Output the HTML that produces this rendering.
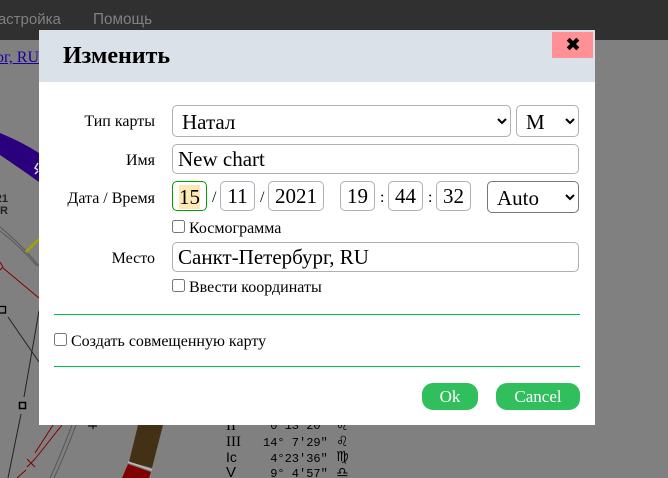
<!DOCTYPE html>
<html><head><meta charset="utf-8">
<style>
html,body{margin:0;padding:0;width:668px;height:478px;overflow:hidden;background:#808080}
body{position:relative;font-family:"Liberation Serif","Noto Serif CJK SC",serif;color:#000}
.a{position:absolute;white-space:nowrap}
.box{position:absolute;box-sizing:border-box;border:1px solid #a9b2bb;border-radius:5px;background:#fff;font-size:21px;line-height:29px;white-space:nowrap}
.c{text-align:center}
.l{position:absolute;right:513px;font-size:16px;line-height:18px;white-space:nowrap}
.cb{position:absolute;box-sizing:border-box;width:13px;height:13px;border:1px solid #767676;border-radius:2.5px;background:#fff}
.t{position:absolute;font-size:16px;line-height:18px;white-space:nowrap}
.hr{position:absolute;left:54px;width:526px;height:1px;background:#00c04b}
.btn{position:absolute;top:383px;height:27px;background:#30bf5c;border-radius:11px;color:#fff;font-size:17px;line-height:28px;text-align:center}
.mono{position:absolute;font-family:"Liberation Mono",monospace;font-size:12px;line-height:16px;color:#000;white-space:pre}
.z{position:absolute;font-family:"DejaVu Sans",sans-serif;font-size:14px;line-height:16px;color:#000;white-space:pre}
.h{position:absolute;left:226px;font-family:"Liberation Sans",sans-serif;line-height:16px;color:#000;white-space:pre}
</style></head>
<body>
<svg class="a" style="left:0;top:0" width="668" height="478" viewBox="0 0 668 478">
<rect x="0" y="40" width="668" height="438" fill="#808080"/>
<path d="M0 133 Q22 142 39 153 L39 182 Q18 167 0 155Z" fill="#2a007d"/>
<path d="M38 163l-3 5 3 2M38 171l-3 3" stroke="#ddd" stroke-width="1.5" fill="none"/>
<path d="M0 227 Q22 245 39 266" stroke="#555" fill="none"/>
<path d="M0 231 Q20 246 37 266" stroke="#555" fill="none"/>
<path d="M26 252L39 239" stroke="#a3a300" stroke-width="2.5"/>
<path d="M3 268L39 298" stroke="#800000" stroke-width="1"/>
<path d="M0 262l3 5-3 3" stroke="#800000" fill="none"/>
<rect x="-1" y="306.500" width="6.500" height="6.500" fill="none" stroke="#000" stroke-width="1.300"/>
<path d="M8 317L39 362" stroke="#222" stroke-width="1"/>
<path d="M39 311L24 397M21 414L8 478" stroke="#222" stroke-width="1"/>
<rect x="19.500" y="402.500" width="6" height="6" fill="none" stroke="#000" stroke-width="1.500"/>
<path d="M53 425L35 453M62 425L35 459M27 459l8 8M35 459l-8 8M26 470L17 478" stroke="#800000" stroke-width="1"/>
<path d="M72 425Q62 452 50 478M76 425Q66 452 54 478" stroke="#555" fill="none"/>
<path d="M138 425L163 425L152 468L129 462Z" fill="#423115"/>
<path d="M128 464L151 472L149 478L122 478Z" fill="#800000"/>
<path d="M128 462L152 470" stroke="#bbb" stroke-width="1.500"/>
<path d="M93 425V429M88 426H97" stroke="#222" stroke-width="1.500"/>
</svg>
<div class="a" style="left:0;top:193px;font-family:'Liberation Sans',sans-serif;font-size:11px;line-height:12px;font-weight:bold;color:#222;width:8px;direction:rtl">21<br>R</div>
<div class="a" style="left:0;top:48px;width:39px;overflow:hidden;height:20px"><span style="position:absolute;right:0;top:0;font-size:16px;line-height:20px;color:#1a00a0;text-decoration:underline">Петербург, RU</span></div>
<div class="a" style="left:0;top:0;width:668px;height:40px;background:#303030"></div>
<div class="a" style="left:-13px;top:10px;font-family:'Liberation Sans',sans-serif;font-size:15px;line-height:20px;color:#808080">Настройка</div>
<div class="a" style="left:93px;top:10px;font-family:'Liberation Sans',sans-serif;font-size:15.300px;line-height:20px;color:#808080">Помощь</div>
<div class="h" style="top:418px;font-size:15px;font-family:'Liberation Serif',serif">II</div>
<div class="h" style="top:434px;font-size:15px;font-family:'Liberation Serif',serif">III</div>
<div class="h" style="top:449px;font-size:14px">Ic</div>
<div class="h" style="top:465px;font-size:15px">V</div>
<div class="mono" style="left:263px;top:418px"> 0&#176;13&#8242;20&#8243;</div>
<div class="mono" style="left:263px;top:435px">14&#176; 7&#8242;29&#8243;</div>
<div class="mono" style="left:263px;top:451px"> 4&#176;23&#8242;36&#8243;</div>
<div class="mono" style="left:263px;top:466px"> 9&#176; 4&#8242;57&#8243;</div>
<div class="z" style="left:336px;top:418px">&#9804;</div>
<div class="z" style="left:336px;top:434px">&#9804;</div>
<div class="z" style="left:336px;top:449px">&#9805;</div>
<div class="z" style="left:336px;top:465px">&#9806;</div>

<div class="a" style="left:39px;top:30px;width:556px;height:395px;background:#fff"></div>
<div class="a" style="left:39px;top:30px;width:556px;height:52px;background:#dae1e8"></div>
<div class="a" style="left:63px;top:41px;font-size:24px;line-height:30px;font-weight:bold">Изменить</div>
<div class="a" style="left:552px;top:32px;width:41px;height:26px;background:#ff9095"></div>
<svg class="a" style="left:566px;top:37px" width="14" height="14" viewBox="0 0 14 14"><path d="M2.200 2.200L11.800 11.800M11.800 2.200L2.200 11.800" stroke="#000" stroke-width="4.200"/></svg>

<div class="l" style="top:113px">Тип карты</div>
<div class="box" style="left:172px;top:105px;width:339px;height:32px;line-height:32px;padding-left:9px">Натал</div>
<svg class="a" style="left:496px;top:117px" width="12" height="9" viewBox="0 0 12 9"><path d="M2 2l4 4 4-4" fill="none" stroke="#000" stroke-width="2"/></svg>
<div class="box" style="left:516px;top:105px;width:63px;height:32px;line-height:32px;padding-left:9px">M</div>
<svg class="a" style="left:564px;top:117px" width="12" height="9" viewBox="0 0 12 9"><path d="M2 2l4 4 4-4" fill="none" stroke="#000" stroke-width="2"/></svg>

<div class="l" style="top:152px">Имя</div>
<div class="box" style="left:172px;top:144px;width:407px;height:30px;padding-left:5px">New chart</div>

<div class="l" style="top:190px">Дата / Время</div>
<div class="box c" style="left:172px;top:181px;width:35px;height:30px;border-color:#00a000"><span style="background:#fde9b3;display:inline-block;line-height:24px;margin-top:3px;vertical-align:top">15</span></div>
<div class="t" style="left:212px;top:189px">/</div>
<div class="box c" style="left:220px;top:181px;width:35px;height:30px">11</div>
<div class="t" style="left:260px;top:189px">/</div>
<div class="box c" style="left:268px;top:181px;width:56px;height:30px">2021</div>
<div class="box c" style="left:340px;top:181px;width:35px;height:30px">19</div>
<div class="t" style="left:380px;top:189px">:</div>
<div class="box c" style="left:388px;top:181px;width:35px;height:30px">44</div>
<div class="t" style="left:428px;top:189px">:</div>
<div class="box c" style="left:436px;top:181px;width:35px;height:30px">32</div>
<div class="box" style="left:487px;top:181px;width:92px;height:32px;line-height:32px;padding-left:9px;border-color:#767676">Auto</div>
<svg class="a" style="left:564px;top:193px" width="12" height="9" viewBox="0 0 12 9"><path d="M2 2l4 4 4-4" fill="none" stroke="#000" stroke-width="2"/></svg>

<div class="cb" style="left:172px;top:220px"></div>
<div class="t" style="left:189px;top:220px">Космограмма</div>

<div class="l" style="top:250px">Место</div>
<div class="box" style="left:172px;top:242px;width:407px;height:30px;padding-left:5px">Санкт-Петербург, RU</div>

<div class="cb" style="left:172px;top:279px"></div>
<div class="t" style="left:189px;top:279px">Ввести координаты</div>

<div class="hr" style="top:314px"></div>
<div class="cb" style="left:54px;top:333px"></div>
<div class="t" style="left:71px;top:333px">Создать совмещенную карту</div>
<div class="hr" style="top:366px"></div>

<div class="btn" style="left:422px;width:56px">Ok</div>
<div class="btn" style="left:496px;width:84px">Cancel</div>
</body></html>
